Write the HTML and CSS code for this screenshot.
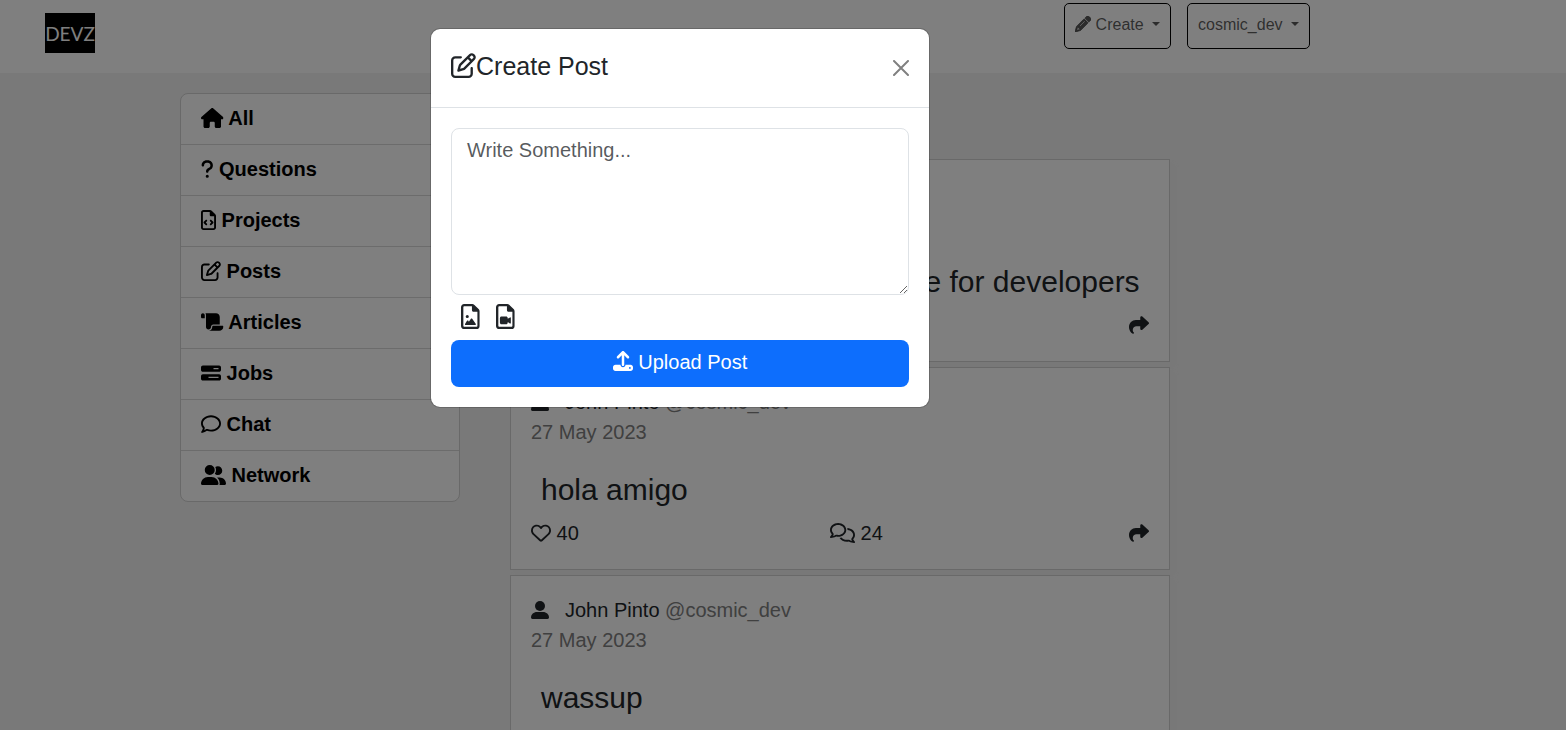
FILE: index.html
```html
<!DOCTYPE html>
<html lang="en">
<head>
<meta charset="utf-8">
<meta name="viewport" content="width=device-width, initial-scale=1">
<title>Devz</title>
<link rel="stylesheet" href="styles.css">
</head>
<body>
<svg class="sprite" aria-hidden="true">
  <symbol id="pencil" viewBox="0 0 512 512"><path stroke="currentColor" stroke-width="16" d="M410.3 231l11.3-11.3-33.9-33.9-62.1-62.1L291.7 89.8l-11.3 11.3-22.6 22.6L58.6 322.9c-10.4 10.4-18 23.3-22.2 37.4L1 480.7c-2.5 8.4-.2 17.5 6.1 23.7s15.3 8.5 23.7 6.1l120.3-35.4c14.1-4.2 27-11.8 37.4-22.2L387.7 253.7 410.3 231zM160 399.4l-9.1 22.7c-4 3.1-8.5 5.4-13.3 6.9L59.4 452l23-78.1c1.4-4.9 3.8-9.4 6.9-13.3l22.7-9.1v32c0 8.8 7.2 16 16 16h32zM362.7 18.7L348.3 33.2 325.7 55.8 314.3 67.1l33.9 33.9 62.1 62.1 33.9 33.9 11.3-11.3 22.6-22.6 14.5-14.5c25-25 25-65.5 0-90.5L453.3 18.7c-25-25-65.5-25-90.5 0zm-47.4 168l-144 144c-6.2 6.2-16.4 6.2-22.6 0s-6.2-16.4 0-22.6l144-144c6.2-6.2 16.4-6.2 22.6 0s6.2 16.4 0 22.6z"/></symbol>
  <symbol id="house" viewBox="0 0 576 512"><path d="M575.8 255.5c0 18-15 32.1-32 32.1h-32l.7 160.2c0 2.7-.2 5.4-.5 8.1V472c0 22.1-17.9 40-40 40H456c-1.1 0-2.2 0-3.3-.1c-1.4 .1-2.8 .1-4.2 .1H416 392c-22.1 0-40-17.9-40-40V448 384c0-17.7-14.3-32-32-32H256c-17.7 0-32 14.3-32 32v64 24c0 22.1-17.9 40-40 40H160 128.1c-1.5 0-3-.1-4.5-.2c-1.2 .1-2.4 .2-3.6 .2H104c-22.1 0-40-17.9-40-40V360c0-.9 0-1.9 .1-2.8V287.6H32c-18 0-32-14-32-32.1c0-9 3-17 10-24L266.4 8c7-7 15-8 22-8s15 2 21 7L564.8 231.5c8 7 12 15 11 24z"/></symbol>
  <symbol id="question" viewBox="0 0 320 512"><path d="M80 160c0-35.3 28.7-64 64-64h32c35.3 0 64 28.7 64 64v3.6c0 21.8-11.1 42.1-29.4 53.8l-42.2 27.1c-25.2 16.2-40.4 44.1-40.4 74V320c0 17.7 14.3 32 32 32s32-14.3 32-32v-1.4c0-8.2 4.2-15.8 11-20.2l42.2-27.1c36.6-23.6 58.8-64.1 58.8-107.7V160c0-70.7-57.3-128-128-128H144C73.3 32 16 89.3 16 160c0 17.7 14.3 32 32 32s32-14.3 32-32zm80 320a40 40 0 1 0 0-80 40 40 0 1 0 0 80z"/></symbol>
  <symbol id="file-code" viewBox="0 0 384 512"><path d="M64 464c-8.8 0-16-7.2-16-16V64c0-8.8 7.2-16 16-16H224v80c0 17.7 14.3 32 32 32h80V448c0 8.8-7.2 16-16 16H64zM64 0C28.7 0 0 28.7 0 64V448c0 35.3 28.7 64 64 64H320c35.3 0 64-28.7 64-64V154.5c0-17-6.7-33.3-18.7-45.3L274.7 18.7C262.7 6.7 246.5 0 229.5 0H64z"/><path d="M153 289c9.4-9.4 9.4-24.6 0-33.9s-24.6-9.4-33.9 0L71 303c-9.4 9.4-9.4 24.6 0 33.9l48 48c9.4 9.4 24.6 9.4 33.9 0s9.4-24.6 0-33.9l-31-31 31-31zM265 255c-9.4-9.4-24.6-9.4-33.9 0s-9.4 24.6 0 33.9l31 31-31 31c-9.4 9.4-9.4 24.6 0 33.9s24.6 9.4 33.9 0l48-48c9.4-9.4 9.4-24.6 0-33.9l-48-48z"/></symbol>
  <symbol id="file-image" viewBox="0 0 384 512"><path d="M64 464c-8.8 0-16-7.2-16-16V64c0-8.8 7.2-16 16-16H224v80c0 17.7 14.3 32 32 32h80V448c0 8.8-7.2 16-16 16H64zM64 0C28.7 0 0 28.7 0 64V448c0 35.3 28.7 64 64 64H320c35.3 0 64-28.7 64-64V154.5c0-17-6.7-33.3-18.7-45.3L274.7 18.7C262.7 6.7 246.5 0 229.5 0H64zm96 256a32 32 0 1 0-64 0 32 32 0 1 0 64 0zm69.2 46.9c-3-4.3-7.9-6.9-13.2-6.9s-10.2 2.6-13.2 6.9l-41.3 59.7-11.9-19.1c-2.9-4.7-8.1-7.5-13.6-7.5s-10.6 2.8-13.6 7.5l-40 64c-3.1 4.9-3.2 11.1-.4 16.2s8.2 8.2 14 8.2h48 32 40 72c6 0 11.4-3.3 14.2-8.6s2.4-11.6-1-16.5l-72-104z"/></symbol>
  <symbol id="file-video" viewBox="0 0 384 512"><path d="M64 464c-8.8 0-16-7.2-16-16V64c0-8.8 7.2-16 16-16H224v80c0 17.7 14.3 32 32 32h80V448c0 8.8-7.2 16-16 16H64zM64 0C28.7 0 0 28.7 0 64V448c0 35.3 28.7 64 64 64H320c35.3 0 64-28.7 64-64V154.5c0-17-6.7-33.3-18.7-45.3L274.7 18.7C262.7 6.7 246.5 0 229.5 0H64z"/><path d="M80 288c0-17.7 14.3-32 32-32h96c17.7 0 32 14.3 32 32v16l44.9-29.9c2-1.3 4.4-2.1 6.8-2.1c6.8 0 12.3 5.5 12.3 12.3V387.7c0 6.8-5.5 12.3-12.3 12.3c-2.4 0-4.8-.7-6.8-2.1L240 368v16c0 17.7-14.3 32-32 32H112c-17.7 0-32-14.3-32-32V288z"/></symbol>
  <symbol id="pen-square" viewBox="0 0 512 512"><path d="M441 58.9L453.1 71c9.4 9.4 9.4 24.6 0 33.9L424 134.1 377.9 88 407 58.9c9.4-9.4 24.6-9.4 33.9 0zM209.8 256.2L344 121.9 390.1 168 255.8 302.2c-2.9 2.9-6.5 5-10.4 6.1l-58.5 16.7 16.7-58.5c1.1-3.9 3.2-7.5 6.1-10.4zM373.1 25L175.8 222.2c-8.7 8.7-15 19.4-18.3 31.1l-28.6 100c-2.4 8.4-.1 17.4 6.1 23.6s15.2 8.5 23.6 6.1l100-28.6c11.8-3.4 22.5-9.7 31.1-18.3L487 138.9c28.1-28.1 28.1-73.7 0-101.8L474.9 25C446.8-3.1 401.2-3.1 373.1 25zM88 64C39.4 64 0 103.4 0 152V424c0 48.6 39.4 88 88 88H360c48.6 0 88-39.4 88-88V312c0-13.3-10.7-24-24-24s-24 10.7-24 24V424c0 22.1-17.9 40-40 40H88c-22.1 0-40-17.9-40-40V152c0-22.1 17.9-40 40-40H200c13.3 0 24-10.7 24-24s-10.7-24-24-24H88z"/></symbol>
  <symbol id="scroll" viewBox="0 0 576 512"><path d="M0 80v48c0 17.7 14.3 32 32 32H48 96V80c0-26.5-21.5-48-48-48S0 53.5 0 80zM112 32c10 13.4 16 30 16 48V384c0 35.3 28.7 64 64 64s64-28.7 64-64v-5.3c0-32.4 26.3-58.7 58.7-58.7H480V128c0-53-43-96-96-96H112zM464 480c61.9 0 112-50.1 112-112c0-8.8-7.2-16-16-16H314.7c-14.7 0-26.7 11.9-26.7 26.7V384c0 53-43 96-96 96H368h96z"/></symbol>
  <symbol id="bars" viewBox="0 0 512 512"><path d="M448 160H320V128H448v32zM48 64C21.5 64 0 85.5 0 112v64c0 26.5 21.5 48 48 48H464c26.5 0 48-21.5 48-48V112c0-26.5-21.5-48-48-48H48zM448 352v32H192V352H448zM48 288c-26.5 0-48 21.5-48 48v64c0 26.5 21.5 48 48 48H464c26.5 0 48-21.5 48-48V336c0-26.5-21.5-48-48-48H48z"/></symbol>
  <symbol id="comment" viewBox="0 0 512 512"><path d="M123.6 391.3c12.9-9.4 29.6-11.8 44.6-6.4c26.5 9.6 56.2 15.1 87.8 15.1c124.7 0 208-80.5 208-160s-83.3-160-208-160S48 160.5 48 240c0 32 12.4 62.8 35.7 89.2c8.6 9.7 12.8 22.5 11.8 35.5c-1.4 18.1-5.7 34.7-11.3 49.4c17-7.9 31.1-16.7 39.4-22.7zM21.2 431.9c1.8-2.7 3.5-5.4 5.1-8.1c10-16.6 19.5-38.4 21.4-62.9C17.7 326.8 0 285.1 0 240C0 125.1 114.6 32 256 32s256 93.1 256 208s-114.6 208-256 208c-37.1 0-72.3-6.4-104.1-17.9c-11.9 8.7-31.3 20.6-54.3 30.6c-15.1 6.6-32.3 12.6-50.1 16.1c-.8 .2-1.6 .3-2.4 .5c-4.4 .8-8.7 1.5-13.2 1.9c-.2 0-.5 .1-.7 .1c-5.1 .5-10.2 .8-15.3 .8c-6.5 0-12.3-3.9-14.8-9.9c-2.5-6-1.1-12.8 3.4-17.4c4.1-4.2 7.8-8.7 11.3-13.5c1.7-2.3 3.3-4.6 4.8-6.9c.1-.2 .2-.3 .3-.5z"/></symbol>
  <symbol id="comments" viewBox="0 0 640 512"><path d="M88.2 309.1c9.8-18.3 6.8-40.8-7.5-55.8C59.4 230.9 48 204 48 176c0-63.5 63.8-128 160-128s160 64.5 160 128s-63.8 128-160 128c-13.1 0-25.8-1.3-37.8-3.6c-10.4-2-21.2-.6-30.7 4.2c-4.1 2.1-8.3 4.1-12.6 6c-16 7.2-32.9 13.5-49.9 18c2.8-4.6 5.4-9.1 7.9-13.6c1.1-1.9 2.2-3.9 3.2-5.9zM0 176c0 41.8 17.2 80.1 45.9 110.3c-.9 1.7-1.9 3.5-2.8 5.1c-10.3 18.4-22.3 36.5-36.6 52.1c-6.6 7-8.3 17.2-4.6 25.9C5.8 378.3 14.4 384 24 384c43 0 86.5-13.3 122.7-29.7c4.8-2.2 9.6-4.5 14.2-6.8c15.1 3 30.9 4.5 47.1 4.5c114.9 0 208-78.8 208-176S322.9 0 208 0S0 78.8 0 176zM432 480c16.2 0 31.9-1.6 47.1-4.5c4.6 2.3 9.4 4.6 14.2 6.8C529.5 498.7 573 512 616 512c9.6 0 18.2-5.7 22-14.5c3.8-8.8 2-19-4.6-25.9c-14.2-15.6-26.2-33.7-36.6-52.1c-.9-1.7-1.9-3.4-2.8-5.1C622.8 384.1 640 345.8 640 304c0-94.4-87.9-171.5-198.2-175.8c4.1 15.2 6.2 31.2 6.2 47.8l0 .6c87.2 6.7 144 67.5 144 127.4c0 28-11.4 54.9-32.7 77.2c-14.3 15-17.3 37.6-7.5 55.8c1.1 2 2.2 4 3.2 5.9c2.5 4.5 5.2 9 7.9 13.6c-17-4.5-33.9-10.7-49.9-18c-4.3-1.9-8.5-3.9-12.6-6c-9.5-4.8-20.3-6.2-30.7-4.2c-12.1 2.4-24.7 3.6-37.8 3.6c-61.7 0-110-26.5-136.8-62.3c-16 5.4-32.8 9.4-50 11.8C279 439.8 350 480 432 480z"/></symbol>
  <symbol id="heart" viewBox="0 0 512 512"><path d="M225.8 468.2l-2.5-2.3L48.1 303.2C17.4 274.7 0 234.7 0 192.8v-3.3c0-70.4 50-130.8 119.2-144C158.6 37.9 198.9 47 231 69.6c9 6.4 17.4 13.8 25 22.3c4.2-4.8 8.7-9.2 13.5-13.3c3.7-3.2 7.5-6.2 11.5-9c0 0 0 0 0 0C313.1 47 353.4 37.9 392.8 45.4C462 58.6 512 119.1 512 189.5v3.3c0 41.9-17.4 81.9-48.1 110.4L288.7 465.9l-2.5 2.3c-8.2 7.6-19 11.9-30.2 11.9s-22-4.2-30.2-11.9zM239.1 145c-.4-.3-.7-.7-1-1.1l-17.8-20c0 0-.1-.1-.1-.1c0 0 0 0 0 0c-23.1-25.9-58-37.7-92-31.2C81.6 101.5 48 142.1 48 189.5v3.3c0 28.5 11.9 55.8 32.8 75.2L256 430.7 431.2 268c20.9-19.4 32.8-46.7 32.8-75.2v-3.3c0-47.3-33.6-88-80.1-96.9c-34-6.5-69 5.4-92 31.2c0 0 0 0-.1 .1s0 0-.1 .1l-17.8 20c-.3 .4-.7 .7-1 1.1c-4.5 4.5-10.6 7-16.9 7s-12.4-2.5-16.9-7z"/></symbol>
  <symbol id="share" viewBox="0 0 512 512"><path d="M307 34.8c-11.5 5.1-19 16.6-19 29.2v64H176C78.8 128 0 206.8 0 304C0 417.3 81.5 467.9 100.2 478.1c2.5 1.4 5.3 1.9 8.1 1.9c10.9 0 19.7-8.9 19.7-19.7c0-7.5-4.3-14.4-9.8-19.5C108.8 431.9 96 414.4 96 384c0-53 43-96 96-96h96v64c0 12.6 7.4 24.1 19 29.2s25 3 34.4-5.4l160-144c6.7-6.1 10.6-14.7 10.6-23.8s-3.8-17.7-10.6-23.8l-160-144c-9.4-8.5-22.9-10.6-34.4-5.4z"/></symbol>
  <symbol id="user" viewBox="0 0 18 18"><circle cx="9" cy="5" r="5"/><path d="M6 11h6c3.400 0 6 2.400 6 5.600c0 .8-.6 1.400-1.400 1.400H1.400C.6 18 0 17.400 0 16.600C0 13.400 2.600 11 6 11z"/></symbol>
  <symbol id="users" viewBox="0 0 640 512"><path d="M96 128a128 128 0 1 1 256 0A128 128 0 1 1 96 128zM0 482.3C0 383.8 79.8 304 178.3 304h91.4C368.2 304 448 383.8 448 482.3c0 16.4-13.3 29.7-29.7 29.7H29.7C13.3 512 0 498.7 0 482.3zM609.3 512H471.4c5.4-9.4 8.6-20.3 8.6-32v-8c0-60.7-27.1-115.2-69.8-151.8c2.4-.1 4.7-.2 7.1-.2h61.4C567.8 320 640 392.2 640 481.3c0 17-13.8 30.7-30.7 30.7zM432 256c-31 0-59-12.6-79.3-32.9C372.4 196.5 384 163.6 384 128c0-26.8-6.6-52.1-18.3-74.3C384.3 40.1 407.2 32 432 32c61.9 0 112 50.1 112 112s-50.1 112-112 112z"/></symbol>
  <symbol id="upload" viewBox="0 0 512 512"><path d="M288 109.3V352c0 17.7-14.3 32-32 32s-32-14.3-32-32V109.3l-73.4 73.4c-12.5 12.5-32.8 12.5-45.3 0s-12.5-32.8 0-45.3l128-128c12.5-12.5 32.8-12.5 45.3 0l128 128c12.5 12.5 12.5 32.8 0 45.3s-32.8 12.5-45.3 0L288 109.3zM64 352H192c0 35.3 28.7 64 64 64s64-28.7 64-64H448c35.3 0 64 28.7 64 64v32c0 35.3-28.7 64-64 64H64c-35.3 0-64-28.7-64-64V416c0-35.3 28.7-64 64-64zM432 456a24 24 0 1 0 0-48 24 24 0 1 0 0 48z"/></symbol>
</svg>

<header class="topbar">
  <a class="logo" href="#">DEVZ</a>
  <div class="topbar-actions">
    <button class="menu-button" type="button"><svg class="icon icon-square"><use href="#pencil"/></svg> Create <span class="caret"></span></button>
    <button class="menu-button" type="button">cosmic_dev <span class="caret"></span></button>
  </div>
</header>

<div class="page">
  <nav class="sidebar" aria-label="Sections">
    <a class="sidebar-link" href="#"><svg class="icon icon-wide"><use href="#house"/></svg> All</a>
    <a class="sidebar-link" href="#"><svg class="icon icon-slim"><use href="#question"/></svg> Questions</a>
    <a class="sidebar-link" href="#"><svg class="icon icon-file"><use href="#file-code"/></svg> Projects</a>
    <a class="sidebar-link" href="#"><svg class="icon icon-square"><use href="#pen-square"/></svg> Posts</a>
    <a class="sidebar-link" href="#"><svg class="icon icon-wide"><use href="#scroll"/></svg> Articles</a>
    <a class="sidebar-link" href="#"><svg class="icon icon-square"><use href="#bars"/></svg> Jobs</a>
    <a class="sidebar-link" href="#"><svg class="icon icon-square"><use href="#comment"/></svg> Chat</a>
    <a class="sidebar-link" href="#"><svg class="icon icon-double"><use href="#users"/></svg> Network</a>
  </nav>

  <main class="feed">
    <article class="post">
      <div class="post-author"><svg class="icon icon-user"><use href="#user"/></svg><span>John Pinto <span class="muted">@cosmic_dev</span></span></div>
      <div class="muted">27 May 2023</div>
      <p class="post-text">That is a social media website for developers</p>
      <div class="post-actions">
        <span class="likes"><svg class="icon icon-square"><use href="#heart"/></svg> 40</span>
        <span><svg class="icon icon-double"><use href="#comments"/></svg> 24</span>
        <span><svg class="icon icon-square"><use href="#share"/></svg></span>
      </div>
    </article>
    <article class="post">
      <div class="post-author"><svg class="icon icon-user"><use href="#user"/></svg><span>John Pinto <span class="muted">@cosmic_dev</span></span></div>
      <div class="muted">27 May 2023</div>
      <p class="post-text">hola amigo</p>
      <div class="post-actions">
        <span class="likes"><svg class="icon icon-square"><use href="#heart"/></svg> 40</span>
        <span><svg class="icon icon-double"><use href="#comments"/></svg> 24</span>
        <span><svg class="icon icon-square"><use href="#share"/></svg></span>
      </div>
    </article>
    <article class="post">
      <div class="post-author"><svg class="icon icon-user"><use href="#user"/></svg><span>John Pinto <span class="muted">@cosmic_dev</span></span></div>
      <div class="muted">27 May 2023</div>
      <p class="post-text">wassup</p>
    </article>
  </main>
</div>

<div class="overlay">
  <section class="modal" role="dialog" aria-modal="true" aria-labelledby="modal-title">
    <header class="modal-header">
      <h1 class="modal-title" id="modal-title"><svg class="icon icon-square"><use href="#pen-square"/></svg>Create Post</h1>
      <button class="close" type="button" aria-label="Close"><svg class="close-icon" viewBox="0 0 16 16"><path d="M1 1l14 14M15 1L1 15"/></svg></button>
    </header>
    <form class="modal-body">
      <textarea class="post-input" aria-label="Post text" placeholder="Write Something..."></textarea>
      <div class="attachments">
        <button class="attach" type="button" aria-label="Add image"><svg class="icon icon-file"><use href="#file-image"/></svg></button>
        <button class="attach" type="button" aria-label="Add video"><svg class="icon icon-file"><use href="#file-video"/></svg></button>
      </div>
      <button class="submit" type="button"><svg class="icon icon-square"><use href="#upload"/></svg> Upload Post</button>
    </form>
  </section>
</div>
</body>
</html>
```

FILE: styles.css
```css
* {
  box-sizing: border-box;
}

body {
  margin: 0;
  height: 100vh;
  overflow: hidden;
  background: #f2f2f2;
  color: #212529;
  font-family: "Liberation Sans", Arial, sans-serif;
  font-size: 20px;
  line-height: 30px;
}

button,
textarea {
  font: inherit;
  color: inherit;
}

a {
  color: inherit;
  text-decoration: none;
}

.sprite {
  display: none;
}

.icon {
  height: 1em;
  fill: currentColor;
  vertical-align: -0.125em;
}

.icon-slim { width: 0.625em; }
.icon-file { width: 0.75em; }
.icon-square { width: 1em; }
.icon-wide { width: 1.125em; }
.icon-double { width: 1.25em; }

.icon-user {
  width: 18px;
  height: 18px;
}

.topbar {
  display: flex;
  justify-content: space-between;
  align-items: flex-start;
  height: 73px;
  padding: 3px 256px 0 45px;
  background: #fff;
}

.logo {
  width: 50px;
  height: 40px;
  margin-top: 10px;
  background: #000;
  color: #fff;
  font-family: Lato, "Liberation Sans", sans-serif;
  font-size: 19px;
  line-height: 42px;
  text-align: center;
}

.topbar-actions {
  display: flex;
  gap: 16px;
}

.menu-button {
  height: 46px;
  padding: 0 10px 2px;
  border: 1px solid #000;
  border-radius: 5px;
  background: none;
  color: rgba(0, 0, 0, 0.65);
  font-size: 16px;
}

.caret {
  display: inline-block;
  margin-left: 4px;
  border-top: 4px solid;
  border-right: 4px solid transparent;
  border-left: 4px solid transparent;
  vertical-align: 4px;
}

.page {
  display: flex;
  align-items: flex-start;
  gap: 50px;
  padding: 20px 180px 0;
}

.sidebar {
  flex: 0 0 280px;
  border: 1px solid #d2d2d2;
  border-radius: 8px;
  background: #fff;
  color: #000;
  font-weight: bold;
}

.sidebar-link {
  display: block;
  padding: 9px 20px 11px;
}

.sidebar-link + .sidebar-link {
  border-top: 1px solid #d8d8d8;
}

.feed {
  flex: 1;
  max-width: 660px;
  padding-top: 66px;
}

.post {
  margin-bottom: 5px;
  padding: 19px 20px 21px;
  border: 1px solid #d3d3d3;
  background: #fff;
  box-shadow: 5px 5px 5px #f0f0f0;
}

.post-author {
  display: flex;
  align-items: center;
  gap: 16px;
}

.muted {
  color: #808080;
}

.post-text {
  margin: 20px 0 6px 10px;
  font-size: 30px;
  line-height: 45px;
}

.post-actions {
  display: flex;
  justify-content: space-between;
}

.likes {
  padding-right: 5px;
}

.overlay {
  position: absolute;
  inset: 0;
  display: flex;
  justify-content: center;
  align-items: flex-start;
  padding: 28px 206px 0 0;
  background: rgba(0, 0, 0, 0.5);
}

.modal {
  width: 500px;
  border: 1px solid rgba(0, 0, 0, 0.18);
  border-radius: 10px;
  background: #fff;
  background-clip: padding-box;
}

.modal-header {
  display: flex;
  justify-content: space-between;
  align-items: center;
  padding: 20px;
  border-bottom: 1px solid #dee2e6;
}

.modal-title {
  margin: 0;
  padding-bottom: 4px;
  font-size: 25px;
  font-weight: normal;
  line-height: 34px;
}

.close {
  display: flex;
  padding: 0;
  border: 0;
  background: none;
}

.close-icon {
  width: 16px;
  fill: none;
  stroke: #808080;
  stroke-width: 2;
  stroke-linecap: round;
}

.modal-body {
  display: flex;
  flex-direction: column;
  padding: 20px;
}

.post-input {
  height: 167px;
  padding: 6px 15px;
  border: 1px solid #dee2e6;
  border-radius: 8px;
  background: #fff;
  resize: vertical;
}

.post-input::placeholder {
  color: rgba(33, 37, 41, 0.75);
}

.attachments {
  display: flex;
  align-items: center;
  gap: 16px;
  height: 45px;
  padding: 0 0 2px 10px;
}

.attach {
  display: flex;
  padding: 0;
  border: 0;
  background: none;
  font-size: 25px;
}

.submit {
  height: 47px;
  padding: 0 15px 4px;
  border: 0;
  border-radius: 8px;
  background: #0d6efd;
  color: #fff;
}
```
